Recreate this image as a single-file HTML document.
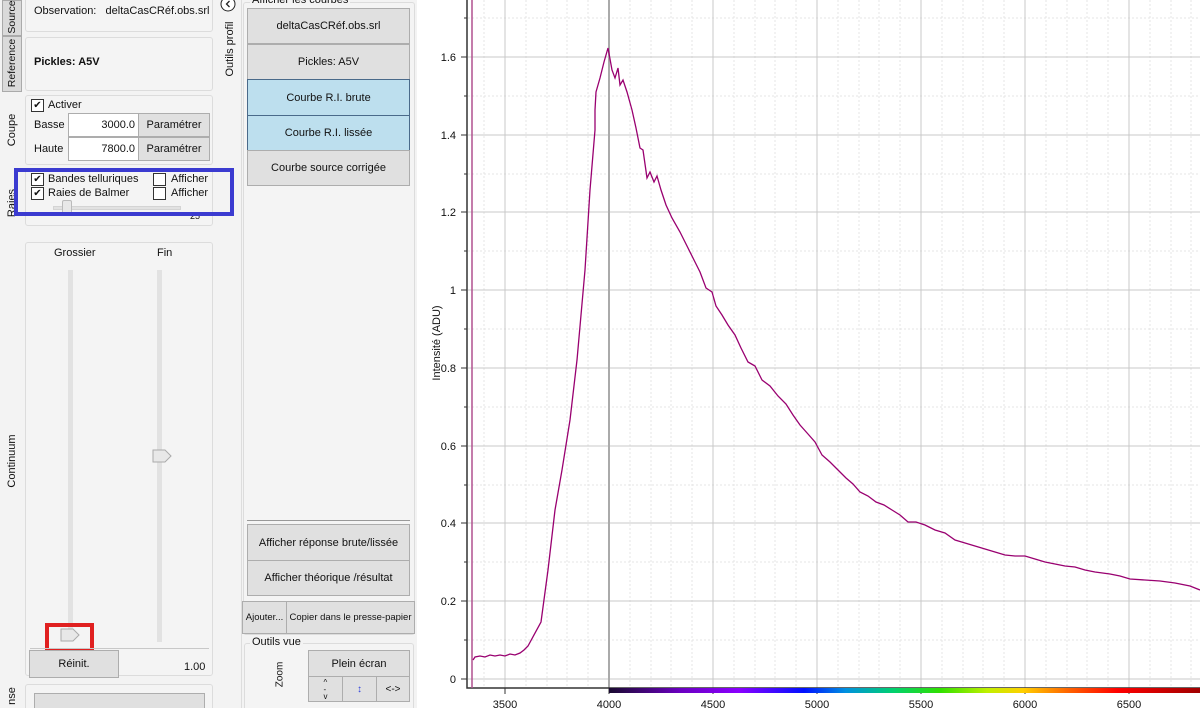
<!DOCTYPE html>
<html style="width:1200px;height:708px;overflow:hidden"><head><meta charset="utf-8"><style>
*{box-sizing:border-box;margin:0;padding:0}
body{width:1200px;height:708px;overflow:hidden;background:#f3f3f3;font-family:"Liberation Sans",sans-serif;font-size:11px;color:#111;position:relative}
.a{position:absolute}
.grp{position:absolute;border:1px solid #dcdcdc;border-radius:3px;background:#f4f4f4}
.btn{position:absolute;background:#e0e0e0;border:1px solid #adadad;display:flex;align-items:center;justify-content:center;font-size:11px;white-space:nowrap;overflow:hidden}
.blue{background:#bddfee;border-color:#4a6a8a}
.vt{position:absolute;transform:rotate(-90deg);transform-origin:center;white-space:nowrap;font-size:11px}
.cb{position:absolute;width:13px;height:13px;border:1px solid #333;background:#fff;font-size:10px;line-height:11px;text-align:center}
.inp{position:absolute;background:#fff;border:1px solid #adadad;text-align:right;padding-right:3px;line-height:22px}
</style></head><body>
<div class="a" style="left:2px;top:0;width:20px;height:36px;background:#dadada;border:1px solid #aaa"></div>
<div class="vt" style="left:-12px;top:11px;width:48px;text-align:center;font-size:10.5px">Source</div>
<div class="a" style="left:2px;top:36px;width:20px;height:56px;background:#dadada;border:1px solid #aaa"></div>
<div class="vt" style="left:-18px;top:57px;width:60px;text-align:center;font-size:10.5px">Reference</div>
<div class="vt" style="left:-14px;top:124px;width:52px;text-align:center">Coupe</div>
<div class="vt" style="left:-14px;top:197px;width:52px;text-align:center">Raies</div>
<div class="vt" style="left:-20px;top:455px;width:64px;text-align:center">Continuum</div>
<div class="vt" style="left:-14px;top:690px;width:52px;text-align:center">nse</div>

<div class="grp" style="left:25px;top:-4px;width:188px;height:36px"></div>
<div class="a" style="left:34px;top:5px;font-size:11px">Observation:&nbsp;&nbsp; deltaCasCRéf.obs.srl</div>
<div class="grp" style="left:25px;top:37px;width:188px;height:54px"></div>
<div class="a" style="left:34px;top:56px;font-weight:bold">Pickles: A5V</div>
<div class="grp" style="left:25px;top:95px;width:188px;height:70px"></div>
<div class="cb" style="left:31px;top:99px">✔</div><div class="a" style="left:48px;top:99px">Activer</div>
<div class="a" style="left:34px;top:119px">Basse</div>
<div class="inp" style="left:68px;top:113px;width:71px;height:24px">3000.0</div>
<div class="btn" style="left:138px;top:113px;width:72px;height:24px">Paramétrer</div>
<div class="a" style="left:34px;top:143px">Haute</div>
<div class="inp" style="left:68px;top:137px;width:71px;height:24px">7800.0</div>
<div class="btn" style="left:138px;top:137px;width:72px;height:24px">Paramétrer</div>
<div class="grp" style="left:25px;top:168px;width:188px;height:58px"></div>
<div class="cb" style="left:31px;top:173px">✔</div><div class="a" style="left:48px;top:173px">Bandes telluriques</div>
<div class="cb" style="left:153px;top:173px"></div><div class="a" style="left:171px;top:173px">Afficher</div>
<div class="cb" style="left:31px;top:187px">✔</div><div class="a" style="left:48px;top:187px">Raies de Balmer</div>
<div class="cb" style="left:153px;top:187px"></div><div class="a" style="left:171px;top:187px">Afficher</div>
<div class="a" style="left:53px;top:206px;width:128px;height:4px;background:#e2e2e2;border:1px solid #d4d4d4"></div>
<div class="a" style="left:62px;top:200px;width:10px;height:15px;background:#e8e8e8;border:1px solid #bbb;border-radius:2px"></div>
<div class="a" style="left:190px;top:211px;font-size:9px">25</div>
<div class="a" style="left:14px;top:168px;width:220px;height:48px;border:4px solid #3b3bd0"></div>

<div class="grp" style="left:25px;top:242px;width:188px;height:434px"></div>
<div class="a" style="left:54px;top:247px">Grossier</div>
<div class="a" style="left:157px;top:247px">Fin</div>
<div class="a" style="left:68px;top:270px;width:5px;height:360px;background:#e2e2e2"></div>
<div class="a" style="left:157px;top:270px;width:5px;height:372px;background:#e2e2e2"></div>
<svg class="a" style="left:150px;top:448px" width="24" height="16"><path d="M3 2H15L21 8L15 14H3Z" fill="#e8e8e8" stroke="#aaa"/></svg>
<svg class="a" style="left:58px;top:627px" width="24" height="16"><path d="M3 2H15L21 8L15 14H3Z" fill="#e8e8e8" stroke="#aaa"/></svg>
<div class="a" style="left:45px;top:623px;width:49px;height:30px;border:4px solid #e02020"></div>
<div class="a" style="left:30px;top:648px;width:179px;height:1px;background:#c8c8c8"></div>
<div class="btn" style="left:29px;top:650px;width:90px;height:28px">Réinit.</div>
<div class="a" style="left:184px;top:661px">1.00</div>
<div class="grp" style="left:25px;top:684px;width:188px;height:30px"></div>
<div class="btn" style="left:34px;top:693px;width:171px;height:20px"></div>

<svg class="a" style="left:219px;top:-5px" width="18" height="18"><circle cx="9" cy="9" r="7" fill="#fff" stroke="#222"/><path d="M10.5 6L7.5 9L10.5 12" fill="none" stroke="#222" stroke-width="1.3"/></svg>
<div class="vt" style="left:194px;top:43px;width:72px;text-align:center">Outils profil</div>
<div class="a" style="left:241px;top:0;width:1px;height:708px;background:#ddd"></div>
<div class="grp" style="left:243px;top:2px;width:172px;height:633px"></div>
<div class="a" style="left:250px;top:-6px;background:#f3f3f3;padding:0 2px">Afficher les courbes</div>
<div class="btn" style="left:247px;top:8px;width:163px;height:36px">deltaCasCRéf.obs.srl</div>
<div class="btn" style="left:247px;top:44px;width:163px;height:36px">Pickles: A5V</div>
<div class="btn blue" style="left:247px;top:79px;width:163px;height:37px">Courbe R.I. brute</div>
<div class="btn blue" style="left:247px;top:115px;width:163px;height:36px">Courbe R.I. lissée</div>
<div class="btn" style="left:247px;top:150px;width:163px;height:36px">Courbe source corrigée</div>
<div class="a" style="left:247px;top:520px;width:163px;height:1px;background:#999"></div>
<div class="btn" style="left:247px;top:524px;width:163px;height:37px">Afficher réponse brute/lissée</div>
<div class="btn" style="left:247px;top:560px;width:163px;height:36px">Afficher théorique /résultat</div>
<div class="btn" style="left:242px;top:601px;width:45px;height:33px;font-size:9.5px">Ajouter...</div>
<div class="btn" style="left:286px;top:601px;width:129px;height:33px;font-size:9.5px">Copier dans le presse-papier</div>
<div class="grp" style="left:244px;top:643px;width:170px;height:70px"></div>
<div class="a" style="left:250px;top:636px;background:#f3f3f3;padding:0 2px">Outils vue</div>
<div class="vt" style="left:262px;top:669px;width:36px;text-align:center;font-size:10px">Zoom</div>
<div class="btn" style="left:308px;top:650px;width:102px;height:27px">Plein écran</div>
<div class="btn" style="left:308px;top:676px;width:35px;height:26px;font-size:8px;line-height:7px;flex-direction:column">^<br>-<br>v</div>
<div class="btn" style="left:342px;top:676px;width:35px;height:26px;font-size:10px;color:#3344dd">↕</div>
<div class="btn" style="left:376px;top:676px;width:34px;height:26px;font-size:10px">&lt;-&gt;</div>

<div class="a" style="left:417px;top:0;width:783px;height:708px;background:#fff"></div>
<svg class="a" style="left:0;top:0" width="1200" height="708" viewBox="0 0 1200 708">
<defs><linearGradient id="sp" x1="0" x2="1"><stop offset="0" stop-color="#1a0a30"/><stop offset="0.12" stop-color="#6a00c0"/><stop offset="0.22" stop-color="#8a00ff"/><stop offset="0.33" stop-color="#0010ff"/><stop offset="0.4" stop-color="#0090e0"/><stop offset="0.48" stop-color="#00d070"/><stop offset="0.56" stop-color="#30e000"/><stop offset="0.64" stop-color="#c0f000"/><stop offset="0.7" stop-color="#ffd000"/><stop offset="0.78" stop-color="#ff6000"/><stop offset="0.86" stop-color="#ff0000"/><stop offset="1" stop-color="#a00000"/></linearGradient></defs>
<g stroke="#e4e4e4" stroke-dasharray="2,2" stroke-width="1">
<path d="M526 0V688M547 0V688M567 0V688M588 0V688M630 0V688M651 0V688M671 0V688M692 0V688M734 0V688M755 0V688M775 0V688M796 0V688M838 0V688M859 0V688M879 0V688M900 0V688M942 0V688M963 0V688M983 0V688M1004 0V688M1046 0V688M1067 0V688M1087 0V688M1108 0V688M1150 0V688M1171 0V688M1191 0V688M484 0V688"/>
<path d="M468 640H1200M468 562H1200M468 485H1200M468 407H1200M468 329H1200M468 251H1200M468 174H1200M468 96H1200M468 18H1200"/>
</g>
<g stroke="#c8c8c8" stroke-width="1">
<path d="M505 0V688M713 0V688M817 0V688M921 0V688M1025 0V688M1129 0V688"/>
<path d="M468 679H1200M468 601H1200M468 523H1200M468 446H1200M468 368H1200M468 290H1200M468 212H1200M468 135H1200M468 57H1200"/>
</g>
<path d="M609 0V688" stroke="#aaa" stroke-width="2"/>
<path d="M467 0V688H1200" stroke="#333" stroke-width="1.5" fill="none"/>
<g stroke="#333"><path d="M461 679H467M461 601H467M461 523H467M461 446H467M461 368H467M461 290H467M461 212H467M461 135H467M461 57H467M464 640H467M464 562H467M464 485H467M464 407H467M464 329H467M464 251H467M464 174H467M464 96H467M464 18H467"/>
<path d="M505 688V694M609 688V694M713 688V694M817 688V694M921 688V694M1025 688V694M1129 688V694"/></g>
<rect x="609" y="688" width="591" height="5" fill="url(#sp)"/>
<path d="M472 0V688" stroke="#b0508f" stroke-width="1.5"/>
<polyline fill="none" stroke="#990070" stroke-width="1.3" points="473,660 475,657 480,656 485,657 490,655 495,656 500,655 505,656 510,654 515,655 520,653 524,650 528,646 541,622 548,570 555,510 562,470 570,420 577,360 585,270 590,190 595,130 595,110 596,92 600,78 604,62 608,48 612,70 615,78 618,68 620,85 623,80 627,92 632,110 636,128 640,148 643,150 647,178 650,172 654,182 657,176 661,190 666,205 672,218 680,232 688,248 695,262 700,272 706,288 712,292 716,306 722,315 728,325 735,335 741,348 748,362 755,366 762,380 770,386 778,396 786,404 793,415 800,425 808,434 815,442 822,455 830,462 838,470 846,478 853,484 860,492 868,496 876,502 884,505 892,510 900,515 908,522 916,522 925,525 935,530 945,533 955,540 965,543 975,546 985,549 995,552 1005,555 1015,556 1025,556 1035,559 1045,562 1055,564 1065,566 1075,567 1085,570 1095,572 1110,574 1120,576 1130,579 1145,580 1160,581 1175,583 1190,586 1200,590"/>
<g font-family="Liberation Sans,sans-serif" font-size="11" fill="#111" text-anchor="end">
<text x="456" y="683">0</text><text x="456" y="605">0.2</text><text x="456" y="527">0.4</text><text x="456" y="450">0.6</text><text x="456" y="372">0.8</text><text x="456" y="294">1</text><text x="456" y="216">1.2</text><text x="456" y="139">1.4</text><text x="456" y="61">1.6</text>
</g>
<g font-family="Liberation Sans,sans-serif" font-size="11" fill="#111" text-anchor="middle">
<text x="505" y="708">3500</text><text x="609" y="708">4000</text><text x="713" y="708">4500</text><text x="817" y="708">5000</text><text x="921" y="708">5500</text><text x="1025" y="708">6000</text><text x="1129" y="708">6500</text>
<text transform="translate(440,343) rotate(-90)" font-size="11">Intensité (ADU)</text>
</g>
</svg>
</body></html>
